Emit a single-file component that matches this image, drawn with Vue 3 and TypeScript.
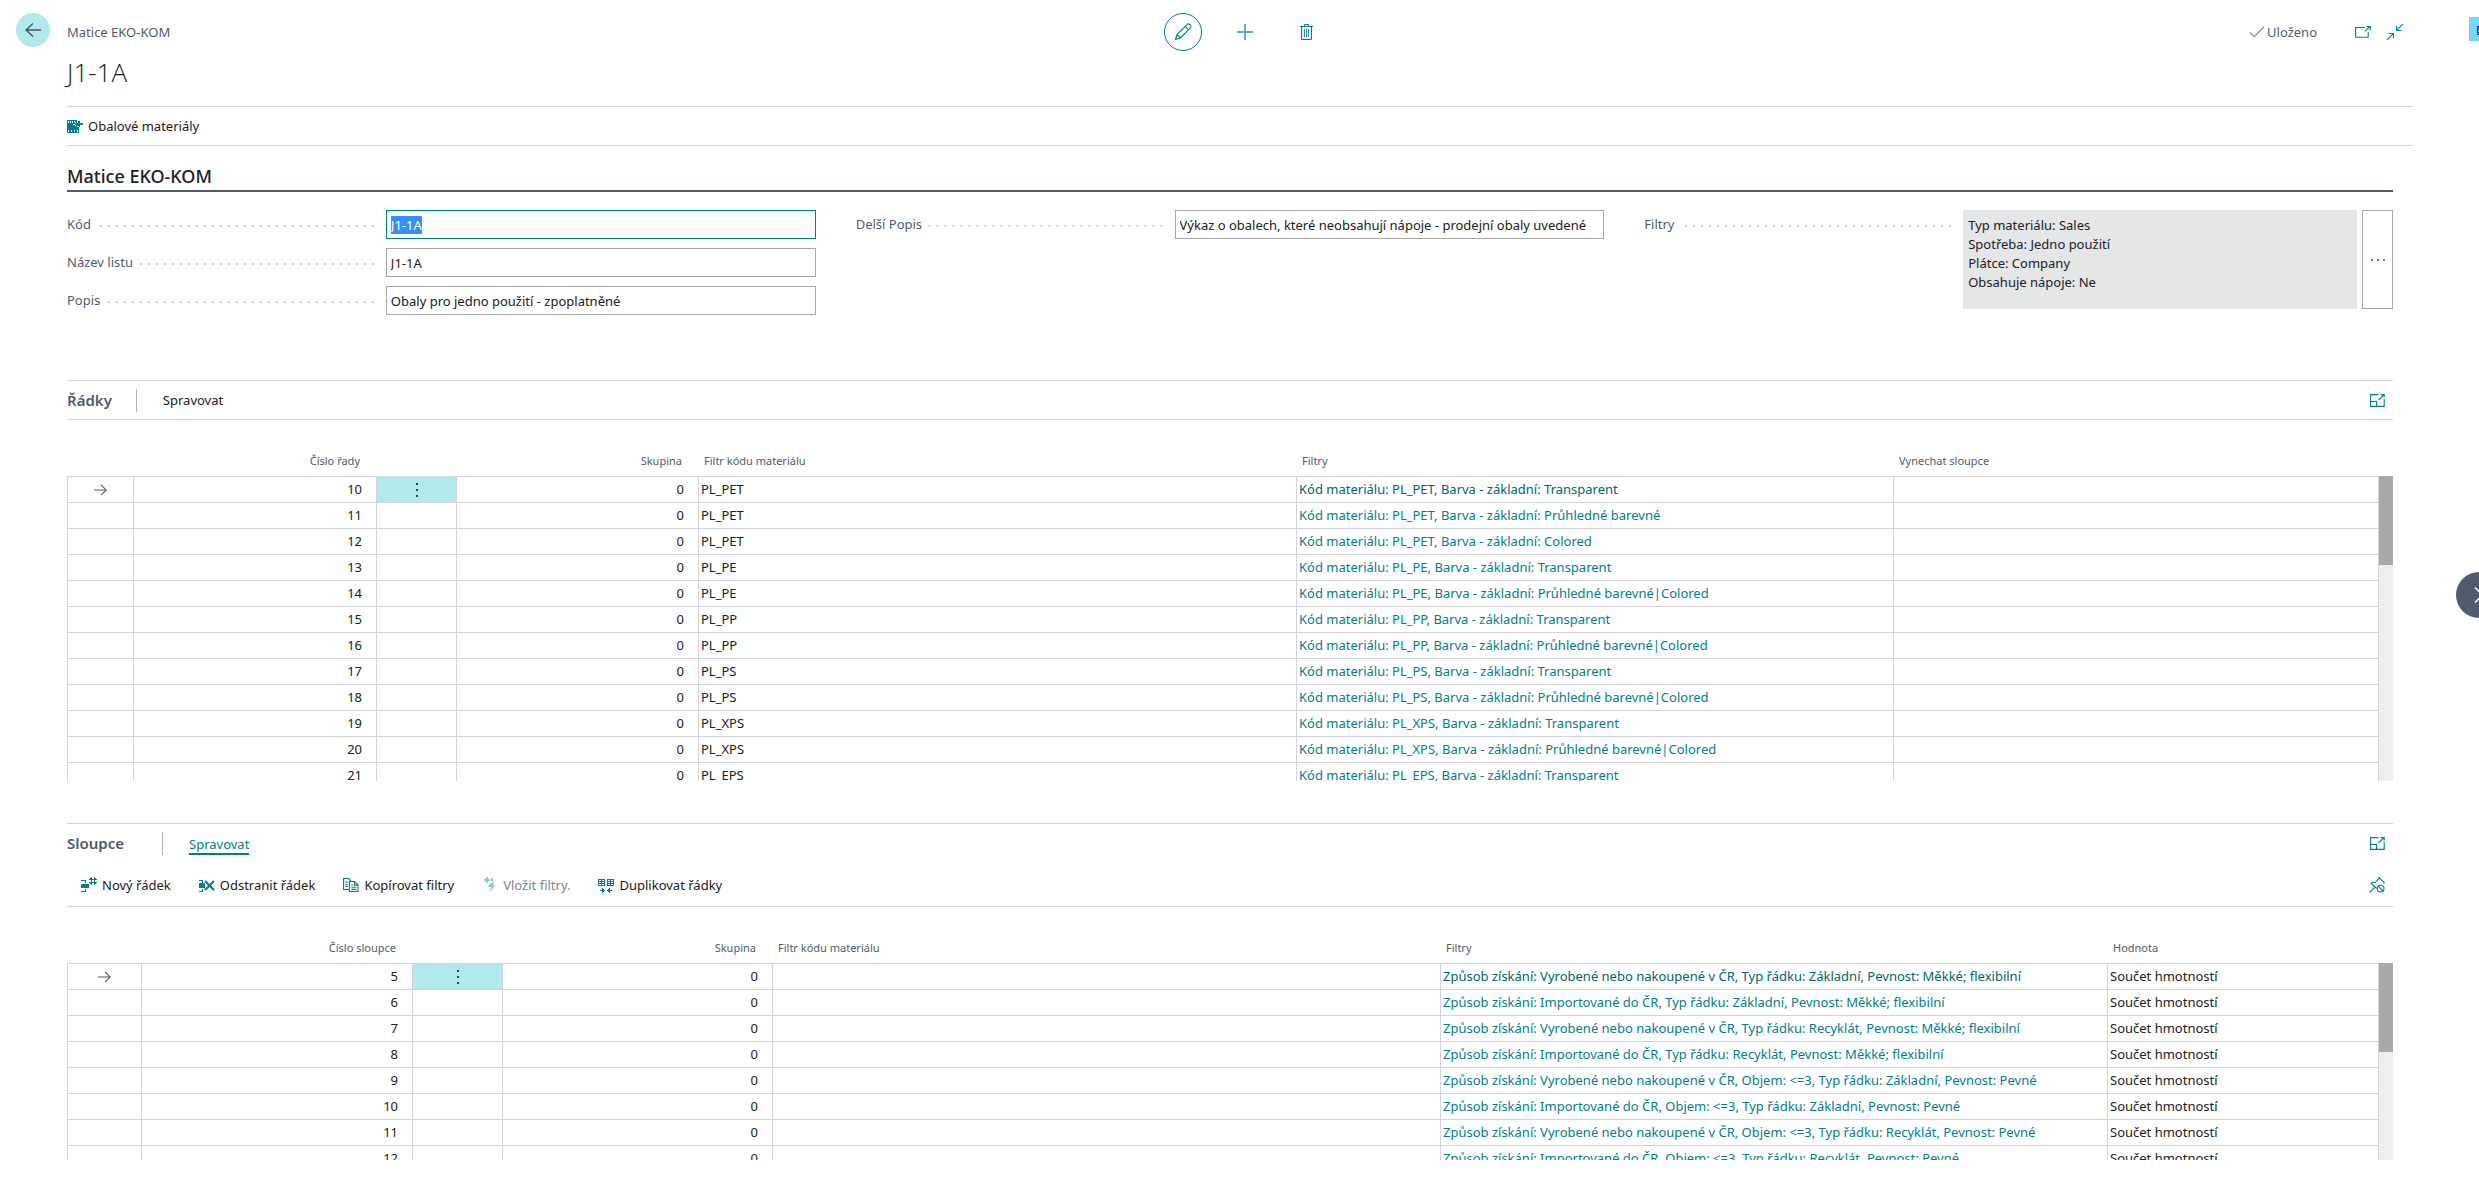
<script setup lang="ts">
import { onMounted, ref } from 'vue'

interface Column {
  key: string
  title: string
  width: number
  kind: 'marker' | 'number' | 'menu' | 'text' | 'link'
}

type Row = Record<string, string>

interface Part {
  id: string
  title: string
  active: boolean
  columns: Column[]
  rows: Row[]
}

const codeInput = ref<HTMLInputElement | null>(null)
const code = ref('J1-1A')
const sheetName = ref('J1-1A')
const description = ref('Obaly pro jedno použití - zpoplatněné')
const longDescription = ref('Výkaz o obalech, které neobsahují nápoje - prodejní obaly uvedené')
const filters = ref('Typ materiálu: Sales\nSpotřeba: Jedno použití\nPlátce: Company\nObsahuje nápoje: Ne')

const material = (no: number, group: string, color: string): Row => ({
  no: String(no),
  group: '0',
  code: group,
  filters: `Kód materiálu: ${group}, Barva - základní: ${color}`,
  last: '',
})

const source = (no: number, filter: string): Row => ({
  no: String(no),
  group: '0',
  code: '',
  filters: `Způsob získání: ${filter}`,
  last: 'Součet hmotností',
})

const parts: Part[] = [
  {
    id: 'lines',
    title: 'Řádky',
    active: false,
    columns: [
      { key: 'marker', title: '', width: 66, kind: 'marker' },
      { key: 'no', title: 'Číslo řady', width: 243, kind: 'number' },
      { key: 'menu', title: '', width: 80, kind: 'menu' },
      { key: 'group', title: 'Skupina', width: 242, kind: 'number' },
      { key: 'code', title: 'Filtr kódu materiálu', width: 598, kind: 'text' },
      { key: 'filters', title: 'Filtry', width: 597, kind: 'link' },
      { key: 'last', title: 'Vynechat sloupce', width: 486, kind: 'text' },
    ],
    rows: [
      material(10, 'PL_PET', 'Transparent'),
      material(11, 'PL_PET', 'Průhledné barevné'),
      material(12, 'PL_PET', 'Colored'),
      material(13, 'PL_PE', 'Transparent'),
      material(14, 'PL_PE', 'Průhledné barevné|Colored'),
      material(15, 'PL_PP', 'Transparent'),
      material(16, 'PL_PP', 'Průhledné barevné|Colored'),
      material(17, 'PL_PS', 'Transparent'),
      material(18, 'PL_PS', 'Průhledné barevné|Colored'),
      material(19, 'PL_XPS', 'Transparent'),
      material(20, 'PL_XPS', 'Průhledné barevné|Colored'),
      material(21, 'PL_EPS', 'Transparent'),
    ],
  },
  {
    id: 'columns',
    title: 'Sloupce',
    active: true,
    columns: [
      { key: 'marker', title: '', width: 74, kind: 'marker' },
      { key: 'no', title: 'Číslo sloupce', width: 271, kind: 'number' },
      { key: 'menu', title: '', width: 90, kind: 'menu' },
      { key: 'group', title: 'Skupina', width: 270, kind: 'number' },
      { key: 'code', title: 'Filtr kódu materiálu', width: 668, kind: 'text' },
      { key: 'filters', title: 'Filtry', width: 667, kind: 'link' },
      { key: 'last', title: 'Hodnota', width: 272, kind: 'text' },
    ],
    rows: [
      source(5, 'Vyrobené nebo nakoupené v ČR, Typ řádku: Základní, Pevnost: Měkké; flexibilní'),
      source(6, 'Importované do ČR, Typ řádku: Základní, Pevnost: Měkké; flexibilní'),
      source(7, 'Vyrobené nebo nakoupené v ČR, Typ řádku: Recyklát, Pevnost: Měkké; flexibilní'),
      source(8, 'Importované do ČR, Typ řádku: Recyklát, Pevnost: Měkké; flexibilní'),
      source(9, 'Vyrobené nebo nakoupené v ČR, Objem: <=3, Typ řádku: Základní, Pevnost: Pevné'),
      source(10, 'Importované do ČR, Objem: <=3, Typ řádku: Základní, Pevnost: Pevné'),
      source(11, 'Vyrobené nebo nakoupené v ČR, Objem: <=3, Typ řádku: Recyklát, Pevnost: Pevné'),
      source(12, 'Importované do ČR, Objem: <=3, Typ řádku: Recyklát, Pevnost: Pevné'),
    ],
  },
]

const share = (part: Part, column: Column): string => {
  const total = part.columns.reduce((sum, c) => sum + c.width, 0)
  return `${(column.width / total) * 100}%`
}

onMounted(() => {
  codeInput.value?.focus()
  codeInput.value?.select()
})
</script>

<template>
  <div class="page">
    <header class="top">
      <div class="top-left">
        <button class="back" type="button" aria-label="Zpět">
          <svg width="16" height="16" viewBox="0 0 16 16" fill="none" stroke="#3c5a66" stroke-width="1.3">
            <path d="M16 8H1M8 1.5L1 8l7 6.5" />
          </svg>
        </button>
        <span class="crumb">Matice EKO-KOM</span>
      </div>
      <div class="top-actions">
        <button class="round ringed" type="button" aria-label="Upravit">
          <svg width="18" height="18" viewBox="0 0 18 18" fill="none" stroke="#008089" stroke-width="1.1">
            <path d="M1.5 16.5L3 11.5L12.8 1.8a2.4 2.4 0 0 1 3.4 3.4L6.4 15zM3 11.5L6.4 15M11.2 3.4l3.4 3.4" />
          </svg>
        </button>
        <button class="round" type="button" aria-label="Nový">
          <svg width="16" height="16" viewBox="0 0 16 16" fill="none" stroke="#5fb2b7" stroke-width="2">
            <path d="M8 0v16M0 8h16" />
          </svg>
        </button>
        <button class="round" type="button" aria-label="Odstranit">
          <svg width="13" height="16" viewBox="0 0 13 16" fill="none" stroke="#008089">
            <path d="M1.5 2.5h10v13h-10z" fill="#e3f3f4" />
            <path d="M0 2.5h13M4.500 2V.5h4V2" />
            <path d="M4.500 5v8M6.500 5v8M8.500 5v8" stroke="#2b959c" />
          </svg>
        </button>
      </div>
      <div class="top-right">
        <span class="saved">
          <svg width="16" height="12" viewBox="0 0 16 12" fill="none" stroke="#8a8f99" stroke-width="1.3">
            <path d="M.8 6.5l4.4 4.2L15 .8" />
          </svg>
          Uloženo
        </span>
        <button class="plain" type="button" aria-label="Otevřít v novém okně">
          <svg width="16" height="12" viewBox="0 0 16 12" fill="none" stroke="#008089" stroke-width="1.1">
            <path d="M10 1.5H.6v9.8h12.6V6M9.8 5.4L15 .7M11.5.6h3.8v3.6" />
          </svg>
        </button>
        <button class="plain" type="button" aria-label="Zmenšit">
          <svg width="16" height="16" viewBox="0 0 16 16" fill="none" stroke="#008089" stroke-width="1.1">
            <path d="M16 0L9.6 6.4M9.6 1.8v4.7h4.8M0 16l6.4-6.4M1.6 9.5h4.9v4.7" />
          </svg>
        </button>
      </div>
    </header>

    <main class="content">
      <h1>J1-1A</h1>

      <nav class="actions">
        <button class="tool" type="button">
          <svg width="16" height="13" viewBox="0 0 16 13" shape-rendering="crispEdges">
            <path fill="#008089" d="M0 0h10v3h1V1h2v2h3v2h-3v2h-1v6H0z" />
            <path fill="#fff" d="M1 1h1v2H1zM3 1h1v2H3zM5 1h1v2H5zM7 1h1v1H7zM8 2h1v1H8zM6 4h2v1H6zM8 5h1v1H8zM10 6h2v1h-2zM1 10h1v2H1zM4 10h1v2H4zM7 10h1v2H7zM10 10h1v2h-1z" />
          </svg>
          Obalové materiály
        </button>
      </nav>

      <section class="card">
        <h2>Matice EKO-KOM</h2>
        <form class="form" @submit.prevent>
          <div class="column">
            <div class="field">
              <label for="code">Kód</label>
              <input id="code" ref="codeInput" v-model="code" type="text" />
            </div>
            <div class="field">
              <label for="sheet">Název listu</label>
              <input id="sheet" v-model="sheetName" type="text" />
            </div>
            <div class="field">
              <label for="description">Popis</label>
              <input id="description" v-model="description" type="text" />
            </div>
          </div>
          <div class="column">
            <div class="field">
              <label for="long">Delší Popis</label>
              <input id="long" v-model="longDescription" type="text" />
            </div>
          </div>
          <div class="column">
            <div class="field">
              <label for="filters">Filtry</label>
              <div class="assist">
                <textarea id="filters" v-model="filters" rows="4" readonly></textarea>
                <button type="button" aria-label="Upravit filtry">
                  <svg width="14" height="2" viewBox="0 0 14 2" fill="#505050">
                    <circle cx="1" cy="1" r="1" />
                    <circle cx="7" cy="1" r="1" />
                    <circle cx="13" cy="1" r="1" />
                  </svg>
                </button>
              </div>
            </div>
          </div>
        </form>
      </section>

      <section v-for="part in parts" :key="part.id" class="part" :class="part.id">
        <div class="part-bar">
          <h3>{{ part.title }}</h3>
          <button class="tab" :class="{ active: part.active }" type="button">Spravovat</button>
          <button class="plain expand" type="button" aria-label="Rozbalit">
            <svg width="15" height="13" viewBox="0 0 15 13" fill="none" stroke="#008089" stroke-width="1.1">
              <path d="M8.5.6H.6v11.8h13.6V5M.6 7.5h6v4.9M8.5 6l5-4.8M10.5.6h3.7v3" />
            </svg>
          </button>
        </div>

        <div v-if="part.active" class="toolbar">
          <button class="tool" type="button">
            <svg width="16" height="16" viewBox="0 0 16 16" fill="#008089" shape-rendering="crispEdges">
              <path d="M0 3h5v1H0zM4 4h1v2H4zM0 7h8v4H0zM4 12h1v2H4zM0 14h5v1H0z" />
              <path d="M9 1h1v1H9zM14 1h1v1h-1zM10 0h1v8h-1zM13 0h1v8h-1zM8 2h8v1H8zM8 5h8v1H8zM9 6h1v1H9zM14 6h1v1h-1z" />
            </svg>
            Nový řádek
          </button>
          <button class="tool" type="button">
            <svg width="16" height="16" viewBox="0 0 16 16" fill="#008089">
              <path d="M0 3h4v1H0zM3 4h1v2H3zM0 6h6v5H0zM3 12h1v2H3zM0 14h4v1H0z" />
              <path d="M6 4L15 13M15 4L6 13" stroke="#008089" stroke-width="2.2" />
            </svg>
            Odstranit řádek
          </button>
          <button class="tool" type="button">
            <svg width="16" height="16" viewBox="0 0 16 16" fill="none" stroke="#008089" stroke-width="1.1">
              <path d="M6 12.500H.6V1.5h5l2 2v1M6.4 4.5h5.2l3.4 3.4v6.6H6.4zM11.4 4.8v3.3h3.4M2.3 5h2.5M2.3 7.2h2.5M2.3 9.4h2.5M8.3 8h1.6M8.3 10.2h5M8.3 12.4h5" />
            </svg>
            Kopírovat filtry
          </button>
          <button class="tool" type="button" disabled>
            <svg width="16" height="16" viewBox="0 0 16 16" fill="#8accd0">
              <path d="M2 2h2V0h2v2h2v2H6v2H4V4H2zM9 1h2v3H9zM8 7l4-3-1 4h2l-6 8 2-6H6z" />
            </svg>
            Vložit filtry.
          </button>
          <button class="tool" type="button">
            <svg width="16" height="16" viewBox="0 0 16 16" fill="#008089" shape-rendering="crispEdges">
              <path d="M0 2h7v7H0zM9 2h7v7H9z" />
              <path fill="#fff" d="M1 3h2v5H1zM4 3h2v1H4zM4 5h2v1H4zM4 7h2v1H4zM10 3h2v5h-2zM13 3h2v1h-2zM13 5h2v1h-2zM13 7h2v1h-2z" />
              <path d="M1 4h2v1H1zM1 6h2v1H1zM10 4h2v1h-2zM10 6h2v1h-2zM2 13h5v1H2zM4 11h1v5H4zM5 12h1v3H5zM9 13h5v1H9zM11 11h1v5h-1zM10 12h1v3h-1z" />
            </svg>
            Duplikovat řádky
          </button>
          <button class="plain expand" type="button" aria-label="Odepnout">
            <svg width="16" height="16" viewBox="0 0 16 16" fill="none" stroke="#008089" stroke-width="1.1">
              <path d="M.5 15.5L6 10M7.5 11.5L2 6.2l1.5-.7 3-.2L10 1.5V.6l5.3 5-1 .6" />
              <circle cx="11.6" cy="11.6" r="3.4" />
              <path d="M9.2 9.2l4.8 4.8" />
            </svg>
          </button>
        </div>

        <div class="grid">
          <div class="viewport">
            <table>
              <colgroup>
                <col v-for="column in part.columns" :key="column.key" :style="{ width: share(part, column) }" />
              </colgroup>
              <thead>
                <tr>
                  <th v-for="column in part.columns" :key="column.key" :class="column.kind" scope="col">{{ column.title }}</th>
                </tr>
              </thead>
              <tbody>
                <tr v-for="(row, index) in part.rows" :key="row.no" :class="{ current: index === 0 }">
                  <td v-for="column in part.columns" :key="column.key" :class="column.kind">
                    <svg v-if="column.kind === 'marker' && index === 0" width="13" height="12" viewBox="0 0 13 12" fill="none" stroke="#505c6d" stroke-width="1.1">
                      <path d="M0 6h12M7 .8L12.2 6 7 11.2" />
                    </svg>
                    <button v-else-if="column.kind === 'menu' && index === 0" type="button" aria-label="Další možnosti">
                      <svg width="2" height="14" viewBox="0 0 2 14" fill="#2d3b6b" shape-rendering="crispEdges">
                        <path d="M0 0h2v2H0zM0 6h2v2H0zM0 12h2v2H0z" />
                      </svg>
                    </button>
                    <a v-else-if="column.kind === 'link'" href="#">{{ row[column.key] }}</a>
                    <template v-else>{{ row[column.key] }}</template>
                  </td>
                </tr>
              </tbody>
            </table>
          </div>
          <div class="track"><div class="thumb"></div></div>
        </div>
      </section>
    </main>

    <span class="badge">D</span>
    <button class="next" type="button" aria-label="Další">
      <svg width="10" height="16" viewBox="0 0 10 16" fill="none" stroke="#fff" stroke-width="1.5">
        <path d="M1 .5L8.5 8 1 15.5" />
      </svg>
    </button>
  </div>
</template>

<style>
body {
  margin: 0;
  background: #fff;
}
</style>

<style scoped>
* {
  box-sizing: border-box;
}

.page {
  position: relative;
  overflow: hidden;
  color: #212121;
  font: 13px/18px "Noto Sans", "Open Sans", sans-serif;
}

button {
  display: flex;
  align-items: center;
  justify-content: center;
  margin: 0;
  padding: 0;
  border: 0;
  background: none;
  color: inherit;
  font: inherit;
  white-space: nowrap;
}

svg {
  display: block;
  flex: none;
}

.top {
  display: grid;
  grid-template-columns: 1fr auto 1fr;
  align-items: center;
  height: 64px;
  padding: 0 76px 0 16px;
}

.top-left {
  display: flex;
  align-items: center;
  gap: 17px;
  color: #505c6d;
}

.back {
  width: 34px;
  height: 34px;
  margin-bottom: 4px;
  border-radius: 50%;
  background: #b2e9ec;
}

.top-actions {
  display: flex;
  gap: 24px;
  padding-left: 70px;
}

.round {
  width: 38px;
  height: 38px;
  border-radius: 50%;
}

.ringed {
  border: 1px solid #008089;
}

.top-right {
  display: flex;
  align-items: center;
  justify-content: flex-end;
  gap: 16px;
}

.saved {
  display: flex;
  align-items: center;
  gap: 2px;
  margin-right: 22px;
  color: #505c6d;
}

.content {
  padding: 0 86px 0 67px;
}

h1,
h2,
h3 {
  margin: 0;
}

h1 {
  margin-top: -8px;
  font: 300 26px/32px "Open Sans", "Noto Sans", sans-serif;
}

.actions {
  display: flex;
  align-items: center;
  height: 40px;
  margin: 18px -19px 0 0;
  border: solid #d3d3d6;
  border-width: 1px 0;
}

.tool {
  gap: 5px;
}

.tool:disabled {
  color: #7d8591;
}

.card {
  margin-top: 18px;
}

h2 {
  padding-bottom: 2px;
  border-bottom: 2px solid #505c6d;
  font-size: 18px;
  font-weight: 500;
  line-height: 24px;
}

.form {
  display: grid;
  grid-template-columns: repeat(3, minmax(0, 1fr));
  gap: 40px;
  margin-top: 18px;
}

.column {
  display: flex;
  flex-direction: column;
  gap: 9px;
}

.field {
  display: grid;
  grid-template-columns: minmax(0, 319fr) minmax(0, 430fr);
  align-items: start;
}

label {
  display: flex;
  align-items: center;
  gap: 6px;
  height: 29px;
  padding-right: 12px;
  color: #505c6d;
  line-height: 29px;
}

label::after {
  flex: 1;
  height: 2px;
  margin-top: 3px;
  background: linear-gradient(90deg, transparent 6px, #cdcfd3 6px) right / 8px 2px repeat-x;
  content: "";
}

input,
textarea {
  width: 100%;
  margin: 0;
  border: 1px solid #a6a6a9;
  border-radius: 0;
  outline: 0;
  color: #212121;
  font: inherit;
}

input {
  height: 29px;
  padding: 0 4px;
  line-height: 19px;
}

input:focus {
  border-color: #008089;
}

input::selection {
  background: #3390ff;
  color: #fff;
}

.assist {
  display: flex;
  gap: 5px;
}

.assist button {
  flex: none;
  width: 31px;
  border: 1px solid #a6a6a9;
}

textarea {
  display: block;
  height: 99px;
  padding: 6px 5px;
  border: 0;
  background: #e5e6e8;
  line-height: 19px;
  resize: none;
}

.lines {
  margin-top: 65px;
}

.columns {
  margin-top: 42px;
}

.part-bar {
  display: flex;
  align-items: center;
  height: 40px;
  border-top: 1px solid #d3d3d6;
}

.lines .part-bar {
  border-bottom: 1px solid #d3d3d6;
}

h3 {
  padding-right: 24px;
  border-right: 1px solid #aeb2ba;
  color: #505c6d;
  font-size: 15px;
  font-weight: 600;
  line-height: 23px;
}

.columns h3 {
  padding-right: 38px;
}

.tab {
  margin-left: 26px;
  border: solid transparent;
  border-width: 2px 0;
}

.tab.active {
  border-bottom-color: #008089;
  color: #008089;
}

.expand {
  width: 16px;
  margin: 0 8px 0 auto;
}

.toolbar {
  display: flex;
  align-items: center;
  gap: 28px;
  height: 44px;
  padding-left: 14px;
  border-bottom: 1px solid #d3d3d6;
}

.grid {
  display: flex;
}

.viewport {
  flex: 1;
  min-width: 0;
  overflow: hidden;
}

.lines .viewport {
  height: 361px;
}

.columns .viewport {
  height: 253px;
}

table {
  width: 100%;
  border-collapse: separate;
  border-spacing: 0;
  table-layout: fixed;
}

th {
  height: 56px;
  padding: 0 16px 7px 6px;
  color: #505c6d;
  font-size: 11px;
  font-weight: 400;
  line-height: 16px;
  text-align: left;
  vertical-align: bottom;
  white-space: nowrap;
}

td {
  height: 26px;
  padding: 0 2px;
  border: solid #d2d4d9;
  border-width: 1px 0 0 1px;
  line-height: 25px;
  white-space: nowrap;
}

td:last-child {
  border-right-width: 1px;
}

.number {
  text-align: right;
}

td.number {
  padding-right: 14px;
}

td.marker svg {
  margin: 0 auto;
}

.current td.menu {
  padding: 0;
  background: #b2e9ec;
}

td button {
  width: 100%;
  height: 25px;
}

a {
  color: #008089;
  text-decoration: none;
}

.current a {
  color: #006670;
}

.track {
  flex: none;
  width: 14px;
  margin-top: 56px;
  background: #eee;
}

.thumb {
  height: 89px;
  background: #a9a9a9;
}

.badge {
  position: absolute;
  top: 17px;
  right: 0;
  width: 10px;
  height: 24px;
  padding-left: 7px;
  overflow: hidden;
  background: #72d6ff;
  line-height: 26px;
}

.next {
  position: absolute;
  top: 572px;
  right: -23px;
  width: 46px;
  height: 46px;
  border-radius: 50%;
  background: #505c6d;
}
</style>
